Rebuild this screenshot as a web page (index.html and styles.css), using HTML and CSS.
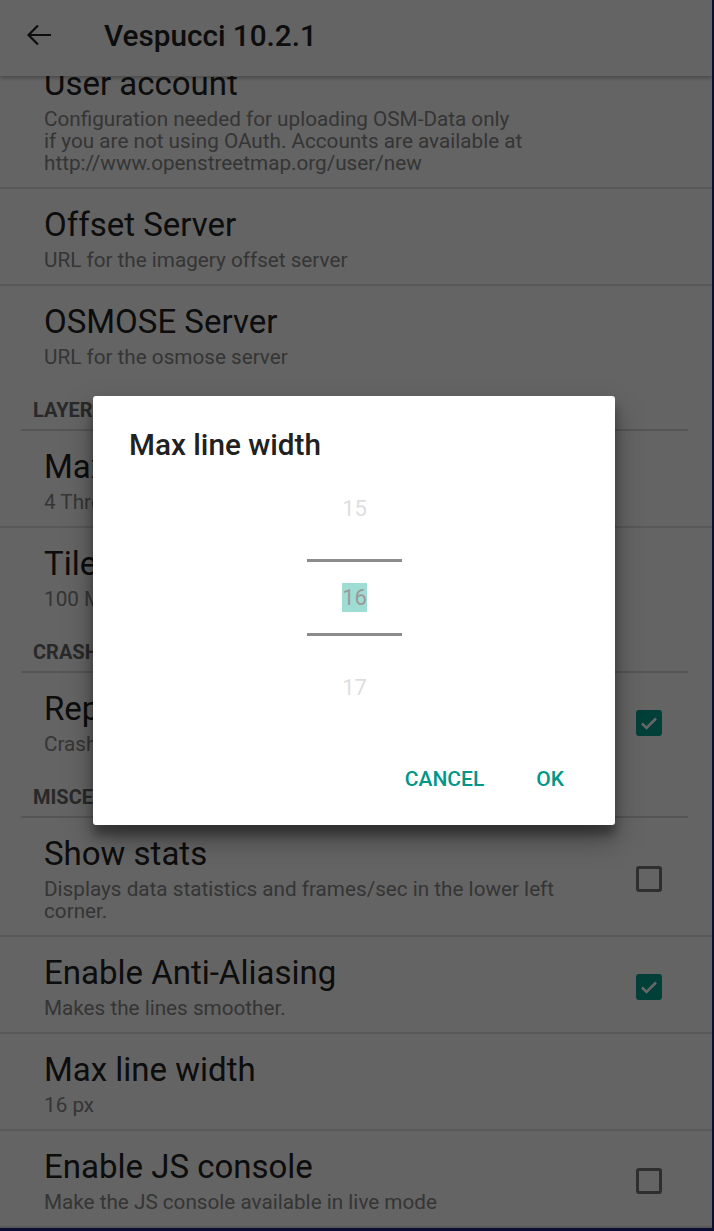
FILE: index.html
```html
<!DOCTYPE html>
<html lang="en">
<head>
<meta charset="utf-8">
<title>Vespucci 10.2.1</title>
<link rel="stylesheet" href="styles.css">
</head>
<body>
<div class="app">
  <header class="toolbar">
    <svg class="back" viewBox="0 0 24 20" aria-hidden="true">
      <path d="M1 10H24M11 0.5L1.5 10L11 19.5" fill="none" stroke="#212121" stroke-width="2.2"/>
    </svg>
    <h1 class="toolbar-title">Vespucci 10.2.1</h1>
  </header>
  <main class="list">
    <div class="list-inner">
      <section class="category">
        <div class="pref">
          <div class="pref-text">
            <div class="pref-title">User account</div>
            <div class="pref-summary">Configuration needed for uploading OSM-Data only<br>if you are not using OAuth. Accounts are available at<br>http://www.openstreetmap.org/user/new</div>
          </div>
        </div>
        <div class="pref">
          <div class="pref-text">
            <div class="pref-title">Offset Server</div>
            <div class="pref-summary">URL for the imagery offset server</div>
          </div>
        </div>
        <div class="pref">
          <div class="pref-text">
            <div class="pref-title">OSMOSE Server</div>
            <div class="pref-summary">URL for the osmose server</div>
          </div>
        </div>
      </section>
      <section class="category">
        <div class="cat-header">LAYERS</div>
        <div class="pref">
          <div class="pref-text">
            <div class="pref-title">Max tile threads</div>
            <div class="pref-summary">4 Threads</div>
          </div>
        </div>
        <div class="pref">
          <div class="pref-text">
            <div class="pref-title">Tile cache size</div>
            <div class="pref-summary">100 MB</div>
          </div>
        </div>
      </section>
      <section class="category">
        <div class="cat-header">CRASH REPORTING</div>
        <div class="pref">
          <div class="pref-text">
            <div class="pref-title">Report crashes</div>
            <div class="pref-summary">Crash reports are sent</div>
          </div>
          <span class="checkbox checked"><svg viewBox="0 0 24 24"><path d="M5 12.5l4.5 4.5L19 7.5" fill="none" stroke="#fff" stroke-width="2.6"/></svg></span>
        </div>
      </section>
      <section class="category">
        <div class="cat-header">MISCELLANEOUS</div>
        <div class="pref">
          <div class="pref-text">
            <div class="pref-title">Show stats</div>
            <div class="pref-summary">Displays data statistics and frames/sec in the lower left corner.</div>
          </div>
          <span class="checkbox"></span>
        </div>
        <div class="pref">
          <div class="pref-text">
            <div class="pref-title">Enable Anti-Aliasing</div>
            <div class="pref-summary">Makes the lines smoother.</div>
          </div>
          <span class="checkbox checked"><svg viewBox="0 0 24 24"><path d="M5 12.5l4.5 4.5L19 7.5" fill="none" stroke="#fff" stroke-width="2.6"/></svg></span>
        </div>
        <div class="pref">
          <div class="pref-text">
            <div class="pref-title">Max line width</div>
            <div class="pref-summary">16 px</div>
          </div>
        </div>
        <div class="pref">
          <div class="pref-text">
            <div class="pref-title">Enable JS console</div>
            <div class="pref-summary">Make the JS console available in live mode</div>
          </div>
          <span class="checkbox"></span>
        </div>
      </section>
    </div>
  </main>
  <div class="scrim">
    <div class="dialog" role="dialog">
      <h2 class="dialog-title">Max line width</h2>
      <div class="picker">
        <div class="picker-item">15</div>
        <div class="picker-item picker-current"><span>16</span></div>
        <div class="picker-item">17</div>
      </div>
      <div class="dialog-actions">
        <span class="btn">CANCEL</span>
        <span class="btn">OK</span>
      </div>
    </div>
  </div>
</div>
</body>
</html>
```

FILE: styles.css
```css
html {
  background: #0c0d33;
}

body {
  margin: 0;
  font-family: Roboto, "Noto Sans", "Liberation Sans", sans-serif;
}

.app {
  position: relative;
  width: 712px;
  height: 1228px;
  background: #fafafa;
  display: flex;
  flex-direction: column;
  overflow: hidden;
}

.toolbar {
  position: relative;
  z-index: 1;
  flex: none;
  height: 76px;
  box-sizing: border-box;
  padding-bottom: 6px;
  display: flex;
  align-items: center;
  background: #fafafa;
  box-shadow: 0 2px 4px rgba(0, 0, 0, 0.28);
}

.back {
  width: 24px;
  height: 20px;
  margin-left: 27px;
  margin-right: 53px;
  flex: none;
}

.toolbar-title {
  margin: 0;
  font-size: 29.7px;
  font-weight: 500;
  color: #212121;
}

.list {
  flex: 1;
  overflow: hidden;
}

.list-inner {
  margin-top: -28px;
}

.pref {
  display: flex;
  align-items: center;
  padding: 17px 50px 13px 44px;
  border-bottom: 2px solid #dcdcdc;
}

.category .pref:last-child {
  border-bottom-color: transparent;
}

.category:last-child .pref:last-child {
  border-bottom-color: #dcdcdc;
}

.pref-text {
  flex: 1;
  min-width: 0;
}

.pref-title {
  font-size: 33px;
  line-height: 38px;
  color: #212121;
  margin-bottom: 5px;
}

.pref-summary {
  font-size: 20.7px;
  line-height: 22px;
  color: #858585;
}

.checkbox {
  flex: none;
  width: 26px;
  height: 26px;
  box-sizing: border-box;
  margin-left: 24px;
  border: 3px solid #737373;
  border-radius: 3px;
  display: flex;
  align-items: center;
  justify-content: center;
}

.checkbox.checked {
  background: #00a090;
  border-color: #00a090;
}

.checkbox svg {
  width: 24px;
  height: 24px;
  flex: none;
}

.cat-header {
  margin: 0 24px 0 21px;
  padding: 16px 0 8px 12px;
  font-size: 20px;
  line-height: 22px;
  font-weight: 700;
  color: #666;
  border-bottom: 2px solid #d5d5d5;
}

.scrim {
  position: absolute;
  inset: 0;
  z-index: 2;
  background: rgba(0, 0, 0, 0.6);
  display: flex;
  align-items: center;
  justify-content: center;
  padding: 0 4px 7px 0;
}

.dialog {
  width: 522px;
  height: 429px;
  box-sizing: border-box;
  background: #fff;
  border-radius: 3px;
  box-shadow: 0 14px 28px rgba(0, 0, 0, 0.35), 0 10px 10px rgba(0, 0, 0, 0.3);
  padding: 32px 35px 22px 36px;
  display: flex;
  flex-direction: column;
}

.dialog-title {
  margin: 0;
  font-size: 29.7px;
  line-height: 34px;
  font-weight: 500;
  color: #212121;
}

.picker {
  align-self: center;
  width: 95px;
  margin-top: 25px;
  display: flex;
  flex-direction: column;
  gap: 28px;
}

.picker-item {
  height: 44px;
  line-height: 44px;
  font-size: 22px;
  color: #dedede;
  text-align: center;
}

.picker-item:last-child {
  margin-top: 2px;
}

.picker-current {
  height: 77px;
  box-sizing: border-box;
  border-top: 3px solid #8c8c8c;
  border-bottom: 3px solid #8c8c8c;
  display: flex;
  align-items: center;
  justify-content: center;
  color: #9a9a9a;
}

.picker-current span {
  background: #9fdcd3;
  line-height: 29px;
}

.dialog-actions {
  margin-top: auto;
  display: flex;
  justify-content: flex-end;
  gap: 20px;
}

.btn {
  font-size: 21px;
  font-weight: 500;
  line-height: 48px;
  padding: 0 16px;
  color: #009688;
}
```
